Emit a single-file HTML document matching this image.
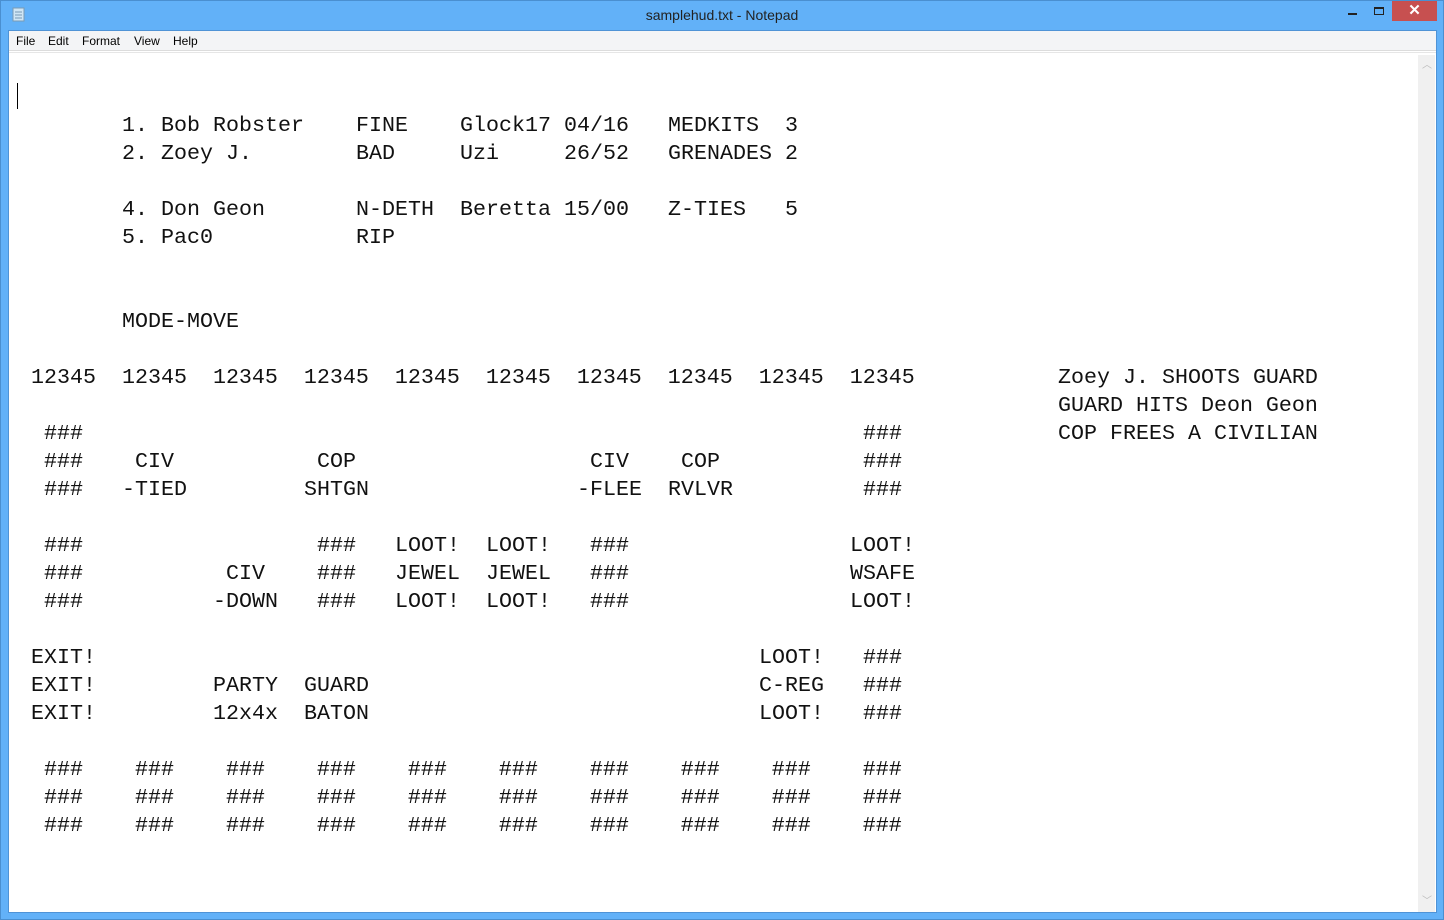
<!DOCTYPE html>
<html><head><meta charset="utf-8"><style>
*{margin:0;padding:0;box-sizing:border-box}
body{width:1444px;height:920px;background:#62b1f8;position:relative;overflow:hidden;font-family:"Liberation Sans",sans-serif}
.frame{position:absolute;inset:0;border:1px solid #4a8fd0}
.title{position:absolute;top:0;left:0;width:1444px;height:30px;text-align:center;font-size:14px;line-height:31px;color:#222}
.close{position:absolute;left:1392px;top:1px;width:45px;height:20px;background:#c75050;color:#fff;text-align:center;font-size:15px;line-height:20px;font-weight:bold}
.min{position:absolute;left:1348px;top:13px;width:9px;height:2px;background:#222}
.max{position:absolute;left:1374px;top:7px;width:10px;height:8px;border:1px solid #222;border-top-width:2px}
.client{position:absolute;left:8px;top:30px;width:1429px;height:883px;background:#fff;border:1px solid #4f93d6}
.menu{position:absolute;left:0;top:0;width:100%;height:20px;background:#f3f4f6;border-bottom:1px solid #dcdcdc;font-size:12px;line-height:20px;color:#000}
.menu span{position:absolute;top:0}
.edit{position:absolute;left:0;top:21px;width:1427px;height:860px;border-top:1px solid #e6e6e6;background:#fff}
.sb{position:absolute;left:1409px;top:2px;width:17px;height:857px;background:#f0f0f0}
.sb .u,.sb .d{position:absolute;left:4px;width:9px;height:9px;color:#bbb;font-size:10px;line-height:9px;text-align:center}
.cursor{position:absolute;left:17px;top:83px;width:1px;height:26px;background:#000}
.t{position:absolute;left:31px;top:1px;font-family:"Liberation Mono",monospace;font-size:21.667px;line-height:28px;color:#111}
.t div{position:absolute;height:28px;white-space:pre}
.t i{position:absolute;font-style:normal;top:0}
</style></head><body>
<div class="frame"></div>
<svg style="position:absolute;left:11px;top:7px" width="16" height="16"><rect x="2" y="1" width="11" height="13" fill="#cfe6f5" stroke="#7a9bb5"/><line x1="4" y1="5" x2="11" y2="5" stroke="#7a9bb5"/><line x1="4" y1="8" x2="11" y2="8" stroke="#7a9bb5"/><line x1="4" y1="11" x2="11" y2="11" stroke="#7a9bb5"/></svg>
<div class="title">samplehud.txt - Notepad</div>
<div class="min"></div><div class="max"></div>
<div class="close">✕</div>
<div class="client">
<div class="menu"><span style="left:7px">File</span><span style="left:39px">Edit</span><span style="left:73px">Format</span><span style="left:125px">View</span><span style="left:164px">Help</span></div>
<div class="edit">
<div class="sb"><div class="u" style="top:6px">︿</div><div class="d" style="bottom:6px">﹀</div></div>
</div>
</div>
<div class="cursor"></div>
<div class="t">
<div style="top:111px"><i style="left:91px">1. Bob Robster</i><i style="left:325px">FINE</i><i style="left:429px">Glock17 04/16</i><i style="left:637px">MEDKITS  3</i></div>
<div style="top:139px"><i style="left:91px">2. Zoey J.</i><i style="left:325px">BAD</i><i style="left:429px">Uzi     26/52</i><i style="left:637px">GRENADES 2</i></div>
<div style="top:195px"><i style="left:91px">4. Don Geon</i><i style="left:325px">N-DETH</i><i style="left:429px">Beretta 15/00</i><i style="left:637px">Z-TIES   5</i></div>
<div style="top:223px"><i style="left:91px">5. Pac0</i><i style="left:325px">RIP</i></div>
<div style="top:307px"><i style="left:91px">MODE-MOVE</i></div>
<div style="top:363px"><i style="left:0">12345  12345  12345  12345  12345  12345  12345  12345  12345  12345</i><i style="left:1027px">Zoey J. SHOOTS GUARD</i></div>
<div style="top:391px"><i style="left:1027px">GUARD HITS Deon Geon</i></div>
<div style="top:419px"><i style="left:13px">###</i><i style="left:832px">###</i><i style="left:1027px">COP FREES A CIVILIAN</i></div>
<div style="top:447px"><i style="left:13px">###</i><i style="left:104px">CIV</i><i style="left:286px">COP</i><i style="left:559px">CIV</i><i style="left:650px">COP</i><i style="left:832px">###</i></div>
<div style="top:475px"><i style="left:13px">###</i><i style="left:91px">-TIED</i><i style="left:273px">SHTGN</i><i style="left:546px">-FLEE</i><i style="left:637px">RVLVR</i><i style="left:832px">###</i></div>
<div style="top:531px"><i style="left:13px">###</i><i style="left:286px">###</i><i style="left:364px">LOOT!</i><i style="left:455px">LOOT!</i><i style="left:559px">###</i><i style="left:819px">LOOT!</i></div>
<div style="top:559px"><i style="left:13px">###</i><i style="left:195px">CIV</i><i style="left:286px">###</i><i style="left:364px">JEWEL</i><i style="left:455px">JEWEL</i><i style="left:559px">###</i><i style="left:819px">WSAFE</i></div>
<div style="top:587px"><i style="left:13px">###</i><i style="left:182px">-DOWN</i><i style="left:286px">###</i><i style="left:364px">LOOT!</i><i style="left:455px">LOOT!</i><i style="left:559px">###</i><i style="left:819px">LOOT!</i></div>
<div style="top:643px"><i style="left:0">EXIT!</i><i style="left:728px">LOOT!</i><i style="left:832px">###</i></div>
<div style="top:671px"><i style="left:0">EXIT!</i><i style="left:182px">PARTY</i><i style="left:273px">GUARD</i><i style="left:728px">C-REG</i><i style="left:832px">###</i></div>
<div style="top:699px"><i style="left:0">EXIT!</i><i style="left:182px">12x4x</i><i style="left:273px">BATON</i><i style="left:728px">LOOT!</i><i style="left:832px">###</i></div>
<div style="top:755px"><i style="left:13px">###    ###    ###    ###    ###    ###    ###    ###    ###    ###</i></div>
<div style="top:783px"><i style="left:13px">###    ###    ###    ###    ###    ###    ###    ###    ###    ###</i></div>
<div style="top:811px"><i style="left:13px">###    ###    ###    ###    ###    ###    ###    ###    ###    ###</i></div>
</div>
</body></html>
